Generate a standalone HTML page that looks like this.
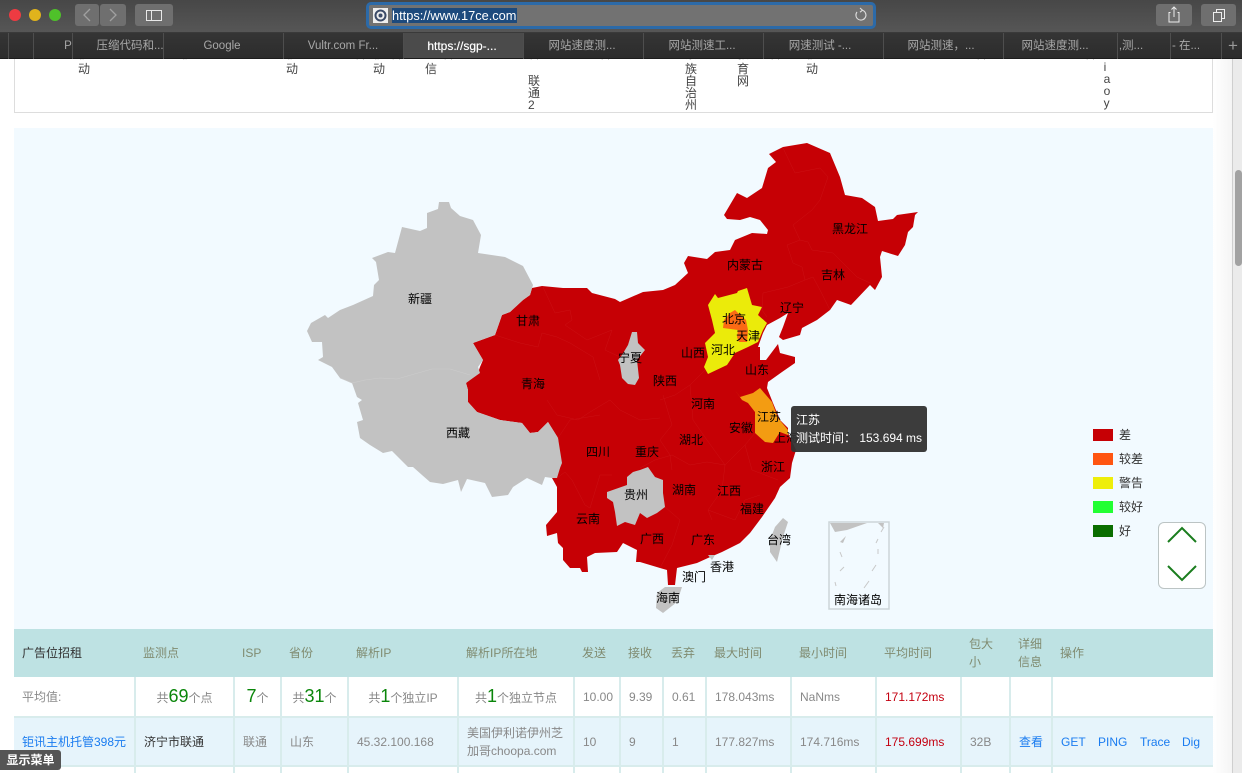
<!DOCTYPE html>
<html lang="zh"><head><meta charset="utf-8"><title>17ce</title>
<style>
*{box-sizing:border-box}
html,body{margin:0;padding:0;width:1242px;height:773px;overflow:hidden;background:#fff;font-family:"Liberation Sans","Noto Sans CJK SC",sans-serif;font-size:12px}
#wrap{position:relative;width:1242px;height:773px;overflow:hidden}
.a{position:absolute}
#bar{left:0;top:0;width:1242px;height:33px;background:linear-gradient(#474747,#565656);border-bottom:1px solid #3a3a3a}
.dot{width:12px;height:12px;border-radius:50%;top:9px}
.btn{top:4px;height:22px;background:#6f6f6f;border-radius:3px}
#tabs{left:0;top:33px;width:1242px;height:26px;background:linear-gradient(#353535,#2c2c2c);border-bottom:1px solid #1c1c1c;z-index:5}
.sep{top:0;width:1px;height:26px;background:#4e4e4e}
.t{top:0;height:25px;line-height:26px;color:#a8a8a8;font-size:11.5px;text-align:center;white-space:nowrap;transform:translateX(-50%)}
.v{color:#444;font-size:12px;line-height:12px;transform:translateX(-50%)}
table{position:absolute;left:14px;top:629px;width:1199px;table-layout:fixed;border-collapse:collapse;font-size:12px;color:#888}
td,th{padding:0 0 0 8px;font-weight:normal;text-align:left;border-right:2px solid #d8ecec;border-bottom:2px solid #d8ecec;line-height:18px;vertical-align:middle}
th{background:#bee2e3;color:#808b70;border:0;height:48px}
.c{text-align:center;padding:0}
.g{color:#0a860a;font-size:18px}
.b{color:#1a7cf0}
.r{color:#c40010}
.l{position:absolute;transform:translate(-50%,-50%);color:#000;font-size:12px;white-space:nowrap;line-height:14px}
</style></head><body><div id="wrap">

<div class="a" style="left:14px;top:59px;width:1199px;height:54px;border:1px solid #ddd;border-top:0"></div>
<div class="a" style="left:1213px;top:59px;width:20px;height:714px;background:linear-gradient(90deg,#fff,#f4f4f4)"></div>
<div class="a" style="left:1232px;top:59px;width:10px;height:714px;background:#ebebeb;border-left:1px solid #cfcfcf"></div>
<div class="a" style="left:1235px;top:170px;width:7px;height:96px;background:#a2a2a2;border-radius:4px"></div>

<div class="a v" style="left:84px;top:48px">移</div><div class="a v" style="left:84px;top:63px">动</div>
<div class="a v" style="left:187px;top:48px">移</div>
<div class="a v" style="left:292px;top:48px">移</div><div class="a v" style="left:292px;top:63px">动</div>
<div class="a v" style="left:360px;top:48px">省</div>
<div class="a v" style="left:379px;top:48px">移</div><div class="a v" style="left:379px;top:63px">动</div>
<div class="a v" style="left:396px;top:48px">省</div>
<div class="a v" style="left:431px;top:48px">电</div><div class="a v" style="left:431px;top:63px">信</div>
<div class="a v" style="left:448px;top:48px">省</div>
<div class="a v" style="left:534px;top:48px">省</div><div class="a v" style="left:534px;top:75px">联<br>通<br>2</div>
<div class="a v" style="left:605px;top:48px">省</div>
<div class="a v" style="left:691px;top:48px">蒙</div><div class="a v" style="left:691px;top:63px">族<br>自<br>治<br>州</div>
<div class="a v" style="left:743px;top:48px">教</div><div class="a v" style="left:743px;top:63px">育<br>网</div>
<div class="a v" style="left:775px;top:48px">省</div>
<div class="a v" style="left:812px;top:48px">移</div><div class="a v" style="left:812px;top:63px">动</div>
<div class="a v" style="left:981px;top:48px">省</div>
<div class="a v" style="left:1090px;top:48px">省</div>
<div class="a v" style="left:1107px;top:48px">n</div><div class="a v" style="left:1107px;top:61px">i<br>a<br>o<br>y</div>

<div class="a" style="left:14px;top:128px;width:1199px;height:501px;background:#f2faff"></div>

<svg class="a" style="left:0;top:0" width="1242" height="773" viewBox="0 0 1242 773">
<polygon fill="#c60005" points="473,343 495,335 502,315 510,312 523,300 530,295 532,288 542,286 563,288 587,288 592,293 615,299 620,302 643,292 663,290 675,285 688,273 684,263 688,256 707,259 715,252 730,250 735,240 752,233 767,234 768,230 760,220 750,217 740,220 727,219 724,215 737,193 747,198 762,188 768,168 776,162 769,154 783,147 807,143 830,153 840,177 845,195 862,198 875,207 878,221 893,219 897,215 918,212 915,215 913,227 908,232 905,245 898,256 882,251 880,257 882,277 875,290 870,285 851,305 837,300 830,310 817,320 802,328 800,335 783,340 779,337 783,327 788,313 780,318 767,325 763,333 758,347 748,347 760,347 760,360 766,360 778,344 780,353 795,357 795,363 782,372 768,382 767,388 773,403 780,420 788,428 788,433 796,450 792,463 790,478 780,487 775,498 762,517 750,533 740,543 722,552 708,558 697,563 677,568 675,585 668,585 667,570 660,568 640,562 636,562 637,550 623,543 617,552 595,553 587,557 588,572 582,572 580,568 570,568 563,560 563,548 558,543 557,533 547,536 546,525 557,512 557,487 552,478 560,468 558,438 548,422 538,432 530,433 522,423 500,420 477,412 468,402 468,390 466,383 478,373 480,367 483,360"/>
<polygon fill="#c2c2c2" points="439,202 449,202 451,208 460,216 473,220 481,235 478,253 505,257 523,266 533,285 530,295 523,300 510,312 502,315 495,335 473,343 483,360 478,367 480,373 466,383 468,390 468,402 477,412 500,420 522,423 530,433 538,432 548,422 558,438 562,463 560,468 557,478 552,478 545,477 542,485 527,478 513,487 508,495 492,497 485,483 467,479 461,492 458,480 443,484 430,482 422,475 413,467 408,467 392,451 383,453 370,445 360,438 357,422 363,420 358,403 362,400 357,397 352,383 340,378 332,367 318,360 323,357 322,342 312,342 307,331 311,323 325,315 328,318 340,310 353,305 373,296 374,285 379,280 376,262 372,258 388,252 395,253 402,227 420,231 427,228 427,213 438,209"/>
<polyline fill="none" stroke="#cccccc" stroke-width=".6" points="340,378 352,383 365,380 380,378 397,379 432,369 450,369 470,375"/>
<polygon fill="#c2c2c2" points="632,332 637,332 638,343 645,350 637,360 639,378 635,385 628,384 622,378 620,365 618,360 622,355 628,345"/>
<polygon fill="#c2c2c2" points="627,477 633,472 640,470 648,467 655,477 663,480 663,493 665,507 657,513 647,518 640,513 635,525 625,522 617,526 615,512 613,502 607,498 607,492 627,485"/>
<polygon fill="#ebeb0a" points="747,288 752,305 762,307 758,315 767,323 763,330 758,342 748,347 735,353 727,365 708,374 704,367 708,357 705,343 715,333 712,320 708,305 715,294 718,298 737,293 738,291"/>
<polygon fill="#fb6a14" points="735,310 738,313 746,320 748,330 738,330 723,328 724,320 730,313"/>
<polygon fill="#fb6a14" points="738,330 748,330 747,342 739,342 737,337"/>
<polygon fill="#f39c12" points="735,390 740,397 753,393 760,388 772,402 778,418 788,430 788,435 780,432 773,443 765,442 755,433 755,412 748,403 742,400"/>
<polygon fill="#c2c2c2" points="783,518 788,522 783,537 777,562 770,552 770,540 775,527"/>
<polygon fill="#c2c2c2" points="665,587 682,587 677,602 663,613 656,608 657,593"/>
<polygon fill="#c2c2c2" points="708,555 715,555 712,560"/>
<g fill="none" stroke="#cc1014" stroke-width=".5">
<polyline points="783,148 795,173 820,168 828,177 820,200 812,210 793,225 800,240 787,245 793,263 802,267 805,280 813,277 820,290 830,310"/>
<polyline points="800,240 808,242 812,250 833,253 847,267 857,277 870,283"/>
<polyline points="805,280 788,287 763,293 762,310 767,317"/>
<polyline points="543,287 555,313 570,310 572,320 565,325 587,340 612,330 605,350 620,357"/>
<polyline points="495,335 520,343 538,347 542,333 557,337 570,343 593,357 600,380"/>
<polyline points="547,400 557,415 578,420 590,412 610,400 620,410 640,420 660,418"/>
<polyline points="558,438 570,420 600,415"/>
<polyline points="557,478 565,472 572,480 585,505 590,508 600,475 612,475"/>
<polyline points="660,400 675,395 690,385 705,370"/>
<polyline points="640,468 655,460 672,455 690,465 707,462 725,465 745,445 755,433"/>
<polyline points="663,395 672,425 660,440 670,455 672,470"/>
<polyline points="690,385 693,420 707,440 725,465 722,490 708,510 712,520"/>
<polyline points="745,445 752,470 778,480"/>
<polyline points="665,507 680,520 672,545 660,568"/>
<polyline points="708,510 735,520 745,500 760,495"/>
</g>
<rect x="829" y="522" width="60" height="87" fill="none" stroke="#ccd5d8" stroke-width="1.5"/>
<polygon fill="#c2c2c2" points="830,523 867,523 847,530 835,532"/>
<polygon fill="#c2c2c2" points="878,523 884,523 883,528"/>
<polygon fill="#c2c2c2" points="840,542 846,536 843,543"/>
<path stroke="#c8c8c8" stroke-width="1" fill="none" d="M840 552l2 5M884 527l-3 5M878 539l-2 4M878 549v5M876 565l-4 6M840 571l4-4M835 582l1 4M869 581l-5 7"/>
</svg>

<div class="a" style="left:0;top:0;width:1242px;height:773px">
<span class="l" style="left:420px;top:299px">新疆</span>
<span class="l" style="left:528px;top:321px">甘肃</span>
<span class="l" style="left:630px;top:358px">宁夏</span>
<span class="l" style="left:533px;top:384px">青海</span>
<span class="l" style="left:458px;top:433px">西藏</span>
<span class="l" style="left:598px;top:452px">四川</span>
<span class="l" style="left:647px;top:452px">重庆</span>
<span class="l" style="left:636px;top:495px">贵州</span>
<span class="l" style="left:588px;top:519px">云南</span>
<span class="l" style="left:665px;top:381px">陕西</span>
<span class="l" style="left:693px;top:353px">山西</span>
<span class="l" style="left:723px;top:350px">河北</span>
<span class="l" style="left:734px;top:319px">北京</span>
<span class="l" style="left:748px;top:336px">天津</span>
<span class="l" style="left:745px;top:265px">内蒙古</span>
<span class="l" style="left:792px;top:308px">辽宁</span>
<span class="l" style="left:833px;top:275px">吉林</span>
<span class="l" style="left:850px;top:229px">黑龙江</span>
<span class="l" style="left:757px;top:370px">山东</span>
<span class="l" style="left:703px;top:404px">河南</span>
<span class="l" style="left:769px;top:417px">江苏</span>
<span class="l" style="left:741px;top:428px">安徽</span>
<span class="l" style="left:691px;top:440px">湖北</span>
<span class="l" style="left:786px;top:438px">上海</span>
<span class="l" style="left:773px;top:467px">浙江</span>
<span class="l" style="left:729px;top:491px">江西</span>
<span class="l" style="left:684px;top:490px">湖南</span>
<span class="l" style="left:752px;top:509px">福建</span>
<span class="l" style="left:652px;top:539px">广西</span>
<span class="l" style="left:703px;top:540px">广东</span>
<span class="l" style="left:779px;top:540px">台湾</span>
<span class="l" style="left:722px;top:567px">香港</span>
<span class="l" style="left:694px;top:577px">澳门</span>
<span class="l" style="left:668px;top:598px">海南</span>
<span class="l" style="left:858px;top:600px">南海诸岛</span>
</div>

<div class="a" style="left:791px;top:406px;width:136px;height:46px;background:rgba(50,50,50,.95);border-radius:3px;color:#fff;font-size:12px;line-height:18px;padding:5px 0 0 5px;white-space:nowrap">江苏<br>测试时间： 153.694 ms</div>

<div class="a" style="left:1093px;top:429px;width:20px;height:12px;background:#c60005"></div>
<div class="a" style="left:1093px;top:453px;width:20px;height:12px;background:#ff5511"></div>
<div class="a" style="left:1093px;top:477px;width:20px;height:12px;background:#eeee0a"></div>
<div class="a" style="left:1093px;top:501px;width:20px;height:12px;background:#22ff33"></div>
<div class="a" style="left:1093px;top:525px;width:20px;height:12px;background:#0a6e00"></div>
<div class="a" style="left:1119px;top:428px;color:#333;line-height:14px">差</div>
<div class="a" style="left:1119px;top:452px;color:#333;line-height:14px">较差</div>
<div class="a" style="left:1119px;top:476px;color:#333;line-height:14px">警告</div>
<div class="a" style="left:1119px;top:500px;color:#333;line-height:14px">较好</div>
<div class="a" style="left:1119px;top:524px;color:#333;line-height:14px">好</div>

<div class="a" style="left:1158px;top:522px;width:48px;height:67px;background:#fff;border:1px solid #bcc4c4;border-radius:6px"></div>
<svg class="a" style="left:1158px;top:522px" width="48" height="67" fill="none" stroke="#1a7d1e" stroke-width="2"><path d="M10 20L24 6L38 20M10 44L24 58L38 44"/></svg>

<table>
<colgroup><col style="width:121px"><col style="width:99px"><col style="width:47px"><col style="width:67px"><col style="width:110px"><col style="width:116px"><col style="width:46px"><col style="width:43px"><col style="width:43px"><col style="width:85px"><col style="width:85px"><col style="width:85px"><col style="width:49px"><col style="width:42px"><col style="width:161px"></colgroup>
<tr><th style="color:#333">广告位招租</th><th>监测点</th><th>ISP</th><th>省份</th><th>解析IP</th><th>解析IP所在地</th><th>发送</th><th>接收</th><th>丢弃</th><th>最大时间</th><th>最小时间</th><th>平均时间</th><th>包大<br>小</th><th>详细<br>信息</th><th>操作</th></tr>
<tr style="height:40px;background:#fff"><td>平均值:</td><td class="c">共<span class="g">69</span>个点</td><td class="c"><span class="g">7</span>个</td><td class="c">共<span class="g">31</span>个</td><td class="c">共<span class="g">1</span>个独立IP</td><td class="c">共<span class="g">1</span>个独立节点</td><td>10.00</td><td>9.39</td><td>0.61</td><td>178.043ms</td><td>NaNms</td><td class="r">171.172ms</td><td></td><td></td><td style="border-right:0"></td></tr>
<tr style="height:49px;background:#e6f4fb"><td class="b" style="white-space:nowrap">钜讯主机托管398元</td><td style="color:#333">济宁市联通</td><td>联通</td><td>山东</td><td>45.32.100.168</td><td>美国伊利诺伊州芝<br>加哥choopa.com</td><td>10</td><td>9</td><td>1</td><td>177.827ms</td><td>174.716ms</td><td class="r">175.699ms</td><td>32B</td><td class="b">查看</td><td class="b" style="border-right:0;white-space:nowrap"><span style="display:inline-block;width:37px">GET</span><span style="display:inline-block;width:42px">PING</span><span style="display:inline-block;width:42px">Trace</span>Dig</td></tr>
<tr style="height:8px;background:#fff"><td style="border-bottom:0"></td><td style="border-bottom:0"></td><td style="border-bottom:0"></td><td style="border-bottom:0"></td><td style="border-bottom:0"></td><td style="border-bottom:0"></td><td style="border-bottom:0"></td><td style="border-bottom:0"></td><td style="border-bottom:0"></td><td style="border-bottom:0"></td><td style="border-bottom:0"></td><td style="border-bottom:0"></td><td style="border-bottom:0"></td><td style="border-bottom:0"></td><td style="border:0"></td></tr>
</table>

<div class="a" style="left:0;top:750px;width:61px;height:20px;background:#555;border-radius:0 3px 3px 0;color:#fff;font-weight:bold;font-size:12px;line-height:20px;text-align:center">显示菜单</div>

<div class="a" id="bar"></div>
<div class="a dot" style="left:9px;background:#ee3b42"></div>
<div class="a dot" style="left:29px;background:#e0b31c"></div>
<div class="a dot" style="left:49px;background:#4fc12a"></div>
<div class="a btn" style="left:75px;width:24px"></div>
<div class="a btn" style="left:100px;width:26px"></div>
<div class="a btn" style="left:135px;width:38px"></div>
<svg class="a" style="left:75px;top:4px" width="100" height="22" fill="none" stroke="#a0a0a0" stroke-width="1.3"><path d="M15 5L9 11L15 17M35 5L41 11L35 17"/><g stroke="#e8e8e8" stroke-width="1"><rect x="71.5" y="6.5" width="15" height="10"/><path d="M76.5 6.5V16.5"/></g></svg>

<div class="a" style="left:366px;top:2px;width:510px;height:27px;border:3px solid #2c6aa8;border-radius:5px;background:#727272"></div>
<div class="a" style="left:373px;top:8px;width:15px;height:15px;background:#eee"></div>
<svg class="a" style="left:373px;top:8px" width="15" height="15"><circle cx="7.500" cy="7.500" r="5" fill="none" stroke="#3b4a68" stroke-width="2"/><circle cx="7.500" cy="7.500" r="2" fill="#3b4a68"/></svg>
<div class="a" style="left:392px;top:8px;height:15px;background:#1d4a7d;color:#fff;font-size:12.800px;line-height:15px;width:125px;overflow:hidden;white-space:nowrap">https://www.17ce.com</div>
<svg class="a" style="left:853px;top:7px" width="16" height="16" fill="none" stroke="#ddd" stroke-width="1.1"><path d="M9 3.200A5 5 0 1 1 4 5"/><path d="M7 1L9.500 3.200L7 5.200"/></svg>

<div class="a btn" style="left:1156px;width:36px"></div>
<div class="a btn" style="left:1201px;width:35px"></div>
<svg class="a" style="left:1156px;top:4px" width="80" height="22" fill="none" stroke="#eee" stroke-width="1"><path d="M14.500 8.500H13V18H23V8.500H21.500M18 13V3M15.500 5.500L18 3L20.500 5.500"/><rect x="57.500" y="8.500" width="8" height="9"/><path d="M60.500 8V5.500H68.500V14.500H66"/></svg>

<div class="a" id="tabs">
<div class="a" style="left:403px;top:0;width:120px;height:25px;background:#4b4b4b"></div>
<div class="a sep" style="left:8px"></div><div class="a sep" style="left:33px"></div><div class="a sep" style="left:72px"></div><div class="a sep" style="left:163px"></div><div class="a sep" style="left:283px"></div><div class="a sep" style="left:403px"></div><div class="a sep" style="left:523px"></div><div class="a sep" style="left:643px"></div><div class="a sep" style="left:763px"></div><div class="a sep" style="left:883px"></div><div class="a sep" style="left:1003px"></div><div class="a sep" style="left:1117px"></div><div class="a sep" style="left:1170px"></div><div class="a sep" style="left:1221px"></div>
<span class="a t" style="left:68px">P</span>
<span class="a t" style="left:130px">压缩代码和...</span>
<span class="a t" style="left:222px">Google</span>
<span class="a t" style="left:343px">Vultr.com Fr...</span>
<span class="a t" style="left:462px;color:#fff;font-size:12px;text-shadow:0 0 .5px #fff">https://sgp-...</span>
<span class="a t" style="left:582px">网站速度测...</span>
<span class="a t" style="left:702px">网站测速工...</span>
<span class="a t" style="left:820px">网速测试 -...</span>
<span class="a t" style="left:941px">网站测速，...</span>
<span class="a t" style="left:1055px">网站速度测...</span>
<span class="a t" style="left:1131px">,测...</span>
<span class="a t" style="left:1186px">- 在...</span>
<span class="a t" style="left:1233px;font-size:17px;color:#999">+</span>
</div>
</div></body></html>
